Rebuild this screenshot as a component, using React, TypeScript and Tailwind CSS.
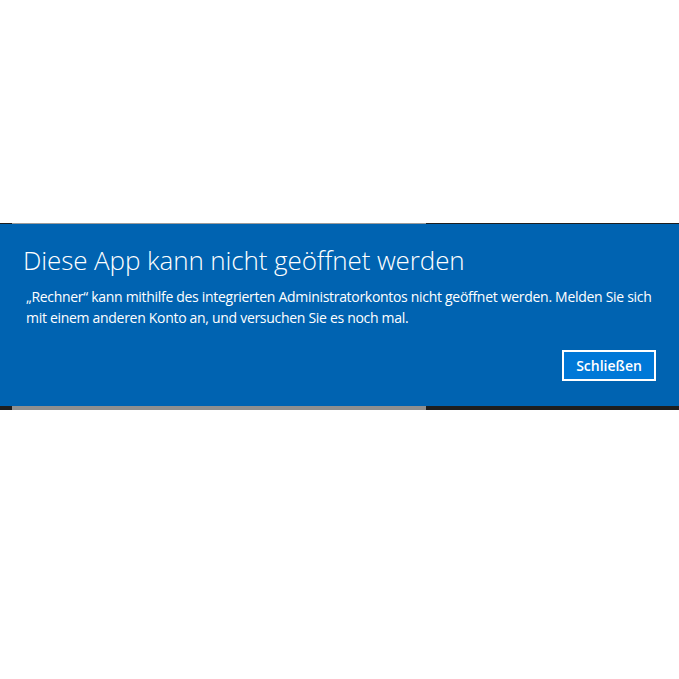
export default function App() {
    return (
        <div className="w-[679px] h-[679px] bg-white overflow-hidden" style={{ fontFamily: '"Open Sans", "Noto Sans", sans-serif' }}>
            <div className="pt-[223px]">
                {/* top edge of the underlying window */}
                <div className="flex h-px">
                    <div className="w-[12px] bg-[#1e1e1e]" />
                    <div className="w-[414px] bg-[#9a9a9a]" />
                    <div className="flex-1 bg-[#1e1e1e]" />
                </div>

                <div className="h-[182px] bg-[#0063b1] text-white pl-[23px] pr-[23px] pt-[20px] flex flex-col">
                    <h1 className="text-[26px] leading-[32px] font-light tracking-[-0.1px]">
                        Diese App kann nicht geöffnet werden
                    </h1>
                    <p className="mt-[10px] text-[14px] leading-[21px] pl-[3px] tracking-[-0.3px]">
                        „Rechner“ kann mithilfe des integrierten Administratorkontos nicht geöffnet werden. Melden Sie sich
                        <br />
                        mit einem anderen Konto an, und versuchen Sie es noch mal.
                    </p>
                    <div className="flex justify-end mt-[22px]">
                        <button className="w-[94px] h-[31px] border-2 border-white bg-[#0078d7] text-[14px] font-semibold text-white">
                            Schließen
                        </button>
                    </div>
                </div>

                <div className="flex h-[4px]">
                    <div className="w-[12px] bg-[#1e1e1e]" />
                    <div className="w-[414px] bg-[#8f8f8f]" />
                    <div className="flex-1 bg-[#1e1e1e]" />
                </div>
            </div>
        </div>
    )
}
